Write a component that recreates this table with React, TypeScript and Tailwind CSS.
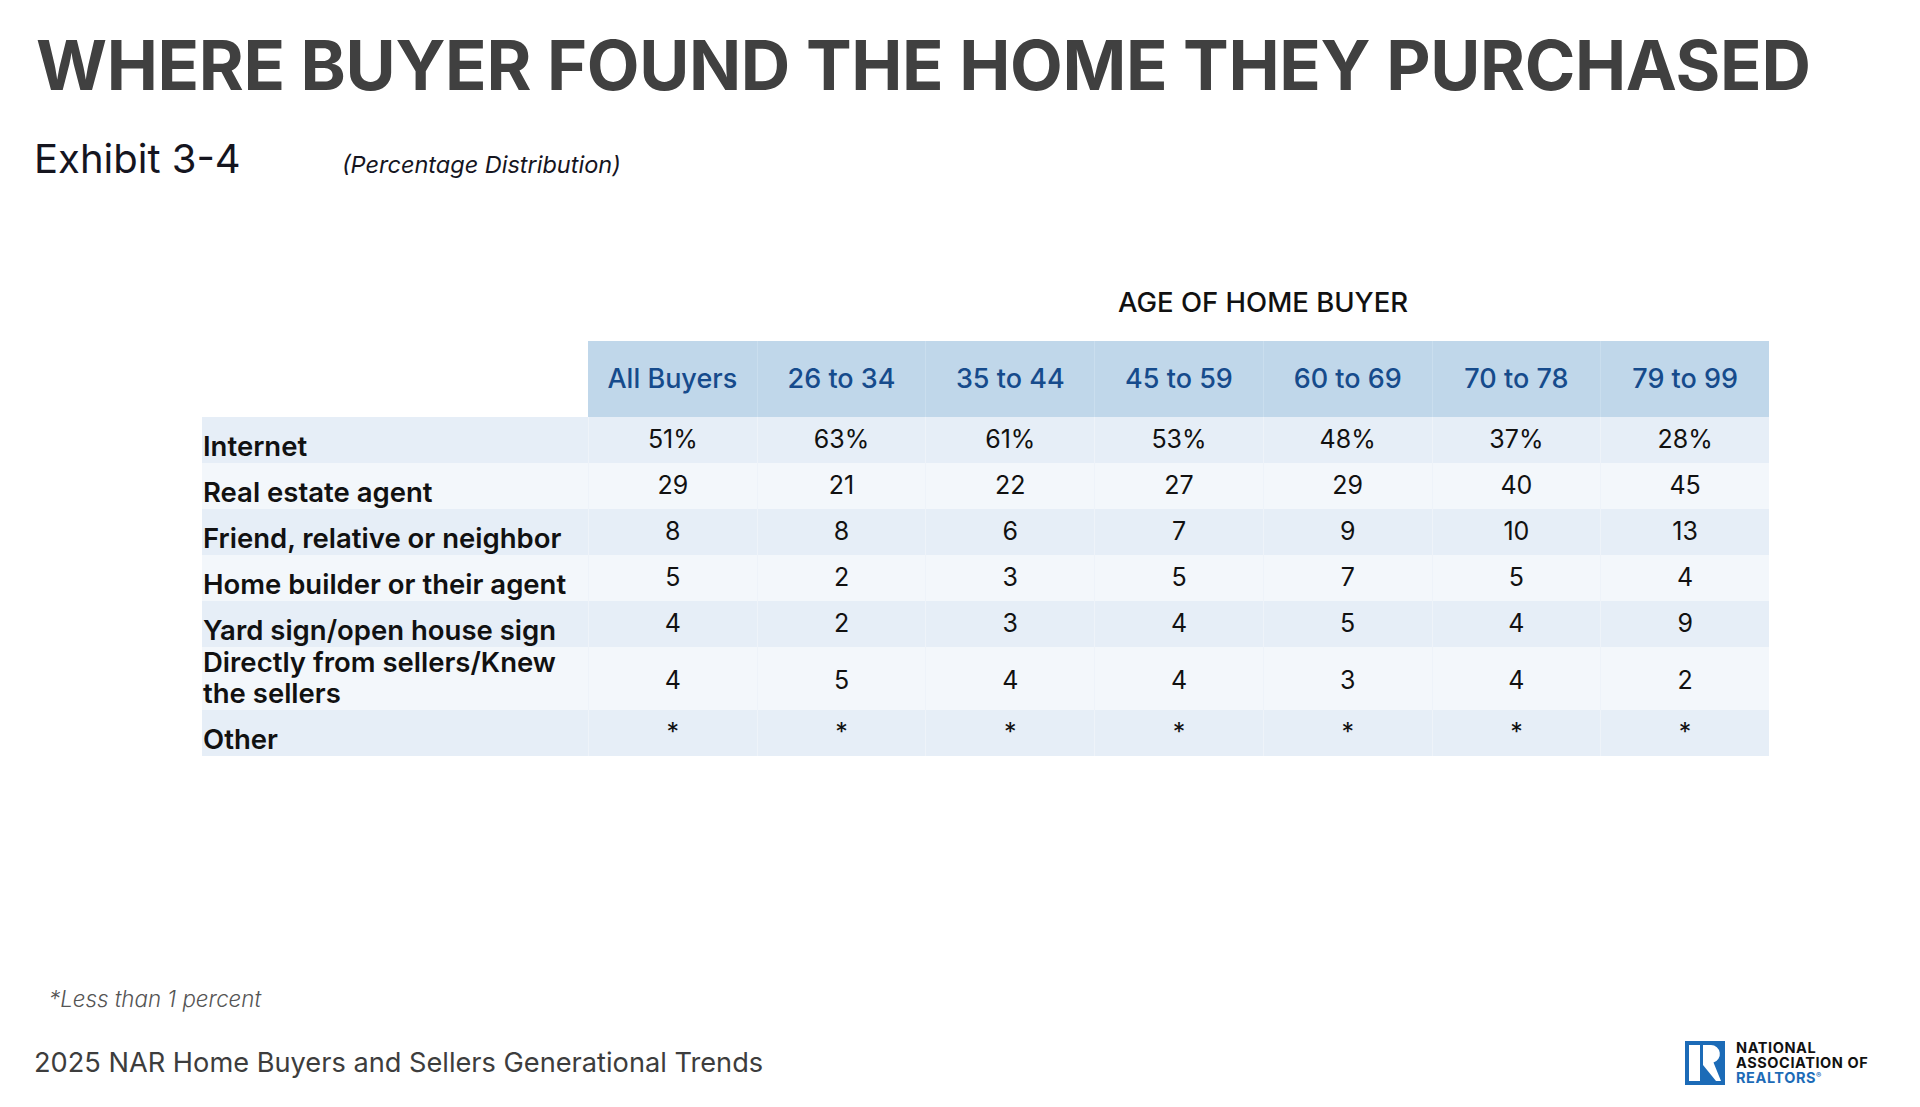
import React from 'react';

const columns = ['All Buyers', '26 to 34', '35 to 44', '45 to 59', '60 to 69', '70 to 78', '79 to 99'];

const rows: { label: React.ReactNode; key: string; values: string[]; tall?: boolean }[] = [
  { key: 'internet', label: 'Internet', values: ['51%', '63%', '61%', '53%', '48%', '37%', '28%'] },
  { key: 'agent', label: 'Real estate agent', values: ['29', '21', '22', '27', '29', '40', '45'] },
  { key: 'friend', label: 'Friend, relative or neighbor', values: ['8', '8', '6', '7', '9', '10', '13'] },
  { key: 'builder', label: 'Home builder or their agent', values: ['5', '2', '3', '5', '7', '5', '4'] },
  { key: 'yard', label: 'Yard sign/open house sign', values: ['4', '2', '3', '4', '5', '4', '9'] },
  {
    key: 'direct',
    label: (
      <>
        Directly from sellers/Knew
        <br />
        the sellers
      </>
    ),
    values: ['4', '5', '4', '4', '3', '4', '2'],
    tall: true,
  },
  { key: 'other', label: 'Other', values: ['*', '*', '*', '*', '*', '*', '*'] },
];

const NarLogo: React.FC = () => (
  <div className="flex items-center gap-[11px]">
    <svg width="40" height="44" viewBox="0 0 40 44">
      <rect width="40" height="44" fill="#1c6bb7" />
      <rect x="4" y="4" width="11" height="36" fill="#ffffff" />
      <path d="M18 4 H26 A9 9 0 0 1 28.5 21.6 L36 40 H31 L18 24 Z" fill="#ffffff" />
    </svg>
    <div className="text-[14.5px] leading-[15px] font-bold tracking-[0.04em] text-[#111111]">
      <div>NATIONAL</div>
      <div>ASSOCIATION OF</div>
      <div className="text-[#1c6bb7]">
        REALTORS<span className="text-[8px] align-top leading-[10px]">®</span>
      </div>
    </div>
  </div>
);

const App: React.FC = () => {
  return (
    <div className="w-[1920px] h-[1107px] bg-white relative overflow-hidden font-['Inter','Liberation_Sans',sans-serif]">
      {/* Heading */}
      <h1 className="pl-[36px] pt-[29px] text-[68.5px] leading-[74px] font-bold text-[#404040] tracking-[-0.005em]">
        WHERE BUYER FOUND THE HOME THEY PURCHASED
      </h1>

      <div className="flex items-baseline pl-[34px] mt-[32px]">
        <span className="text-[40px] leading-[48px] text-[#15151f] w-[308px]">Exhibit 3-4</span>
        <span className="text-[23.5px] italic text-[#15151f]">(Percentage Distribution)</span>
      </div>

      {/* Table */}
      <div className="ml-[202px] w-[1567px] mt-[104px]">
        <div className="pl-[916px] text-[27.5px] leading-[30px] font-medium text-[#111111] mb-[24px]">
          AGE OF HOME BUYER
        </div>

        <div className="grid grid-cols-[386px_repeat(7,1fr)]">
          <div />
          {columns.map((c, i) => (
            <div
              key={c}
              className={`h-[76px] flex items-center justify-center bg-[#c0d7ea] text-[27px] font-medium text-[#164b8c] ${i > 0 ? 'border-l border-[#cadeee]' : ''}`}
            >
              {c}
            </div>
          ))}

          {rows.map((r, ri) => {
            const bg = ri % 2 === 0 ? 'bg-[#e6eef7]' : 'bg-[#f3f7fb]';
            const h = r.tall ? 'h-[63px]' : 'h-[46px]';
            return (
              <React.Fragment key={r.key}>
                <div className={`${h} ${bg} flex items-end pl-[1px] pb-[1px] text-[27.5px] leading-[31px] font-semibold text-[#111111] whitespace-nowrap`}>
                  <span>{r.label}</span>
                </div>
                {r.values.map((v, vi) => (
                  <div
                    key={vi}
                    className={`${h} ${bg} flex items-center justify-center text-[25px] text-[#111111] border-l border-[#eef3f9] ${r.tall ? 'pt-[4px]' : 'pb-[1px]'}`}
                  >
                    {v}
                  </div>
                ))}
              </React.Fragment>
            );
          })}
        </div>
      </div>

      {/* Footer */}
      <div className="absolute left-[49px] top-[982px] text-[22.3px] italic font-light text-[#555555]">
        *Less than 1 percent
      </div>
      <div className="absolute left-[34px] top-[1043px] text-[27.2px] text-[#3d3d3d]">
        2025 NAR Home Buyers and Sellers Generational Trends
      </div>
      <div className="absolute left-[1685px] top-[1040px]">
        <NarLogo />
      </div>
    </div>
  );
};

export default App;
